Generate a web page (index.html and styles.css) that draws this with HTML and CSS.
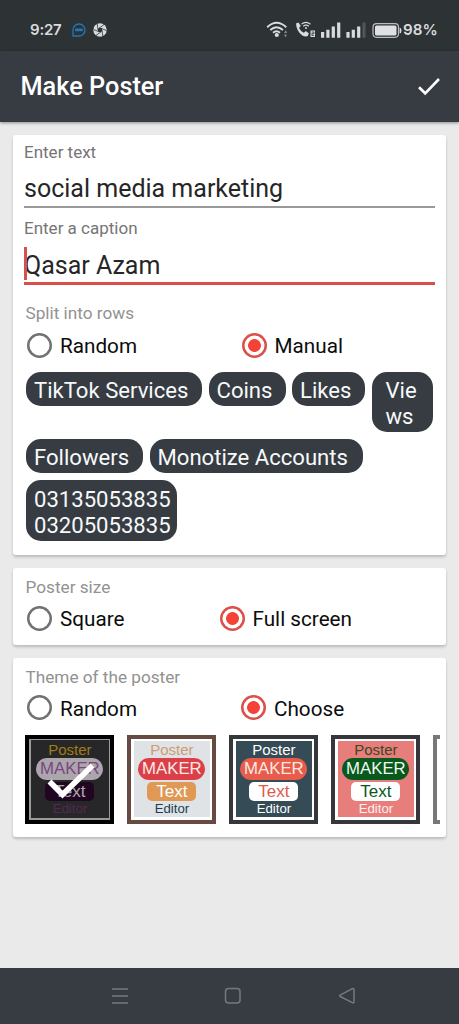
FILE: index.html
```html
<!DOCTYPE html>
<html lang="en">
<head>
<meta charset="utf-8">
<title>Make Poster</title>
<link rel="stylesheet" href="styles.css">
</head>
<body>
<div class="screen">
  <div class="statusbar">
    <span class="clock">9:27</span>
    <svg class="st-chat" width="14" height="14" viewBox="0 0 14 14"><path d="M1 13V7a6 6 0 1 1 6 6z" fill="none" stroke="#2377b3" stroke-width="1.3"/><rect x="3" y="5.5" width="8" height="2.8" rx="1" fill="#2377b3"/></svg>
    <svg class="st-shutter" width="14" height="14" viewBox="0 0 14 14"><circle cx="7" cy="7" r="6.7" fill="#d9dbdc"/><circle cx="7" cy="7" r="2.200" fill="#2d3235"/><path d="M5 7L4.200 .8M6 5.200L11.100 1.500M8 5.200L13.500 7.600M9 7L9.800 13.200M8 8.800L2.900 12.500M6 8.800L.5 6.400" stroke="#2d3235" stroke-width=".8"/></svg>
    <svg class="st-icons" width="136" height="20" viewBox="0 0 136 20">
      <g fill="none" stroke="#d9dbdc" stroke-width="1.900">
        <path d="M1.200 8.200Q10.500 -.6 20.300 8.200M4.300 11Q10.500 5.300 17 11M7 13.800Q10.500 10.800 14 13.800"/>
      </g>
      <circle cx="10.800" cy="16" r="2.100" fill="#d9dbdc"/>
      <path d="M18 14l2-3 1 3zM18 15.500h3l-1.500 3z" fill="#85898c"/>
      <path d="M30 4.500l2.500-1.100 2.200 3.700-1.700 2q1.700 3.500 4.800 4.700l2-1.700 3 2.100-.9 2.800q-2.300 1.200-5.600-.6Q30.500 12.500 30 4.500z" fill="#d9dbdc"/>
      <path d="M35.500 5.200q4.400-3.700 9 0M37.200 7.200q2.800-2.200 5.600 0" fill="none" stroke="#d9dbdc" stroke-width="1.100"/><circle cx="40" cy="8.900" r="1" fill="#d9dbdc"/>
      <rect x="44.500" y="11.500" width="4.500" height="6.500" fill="#d9dbdc"/><path d="M45.700 13h2.200v1.600h-2v1.800h2.200" fill="none" stroke="#2d3235" stroke-width=".8"/>
      <path d="M55 13h3.200v5.700H55zM60.300 10.800h3.200v7.900h-3.200zM65.700 7.600h3.200v11.100h-3.200zM71.100 3.500h3.200v15.200h-3.200zM80.400 13h3.200v5.700h-3.200zM85.700 10.800h3.200v7.900h-3.200zM91.100 7.600h3.200v11.100h-3.200z" fill="#d9dbdc"/>
      <rect x="96.500" y="3.500" width="3" height="15.200" fill="#50565a"/>
      <rect x="107" y="4.700" width="25.500" height="13.600" rx="3.500" fill="none" stroke="#babdbf" stroke-width="1.200"/>
      <rect x="109" y="6.600" width="21.500" height="9.800" rx="1.500" fill="#dfe0e1"/>
      <path d="M133.600 8.500q1.900.4 1.900 3t-1.900 3z" fill="#d9dbdc"/>
    </svg>
    <span class="battery">98%</span>
  </div>
  <header class="appbar">
    <h1>Make Poster</h1>
    <svg width="24" height="20" viewBox="0 0 24 20"><path d="M2 10.200L8.200 16.300L22 2" fill="none" stroke="#fff" stroke-width="2.600"/></svg>
  </header>
  <main>
    <section class="card text-card">
      <label class="field-label">Enter text</label>
      <div class="field">social media marketing</div>
      <label class="field-label second">Enter a caption</label>
      <div class="field focused"><i class="caret"></i>Qasar Azam</div>
      <h2 class="section">Split into rows</h2>
      <div class="options manual">
        <span class="option"><i class="radio"></i>Random</span>
        <span class="option"><i class="radio on"></i>Manual</span>
      </div>
      <div class="chips">
        <div class="chip-row"><span class="chip c-tiktok">TikTok Services</span><span class="chip c-coins">Coins</span><span class="chip c-likes">Likes</span><span class="chip c-views">Vie<br>ws</span></div>
        <div class="chip-row"><span class="chip c-followers">Followers</span><span class="chip c-accounts">Monotize Accounts</span></div>
        <div class="chip-row"><span class="chip c-phone">03135053835<br>03205053835</span></div>
      </div>
    </section>
    <section class="card size-card">
      <h2 class="section">Poster size</h2>
      <div class="options size">
        <span class="option"><i class="radio"></i>Square</span>
        <span class="option"><i class="radio on"></i>Full screen</span>
      </div>
    </section>
    <section class="card theme-card">
      <h2 class="section">Theme of the poster</h2>
      <div class="options theme">
        <span class="option"><i class="radio"></i>Random</span>
        <span class="option"><i class="radio on"></i>Choose</span>
      </div>
      <div class="thumbs">
        <div class="thumb t-dark"><div class="art"><span class="l1">Poster</span><span class="l2">MAKER</span><span class="l3">Text</span><span class="l4">Editor</span></div>
          <svg class="tick" width="48" height="38" viewBox="0 0 48 38"><path d="M2.500 18.500L15.500 31.500L45.500 2.500" fill="none" stroke="#fff" stroke-width="5.600"/></svg></div>
        <div class="thumb t-light"><div class="art"><span class="l1">Poster</span><span class="l2">MAKER</span><span class="l3">Text</span><span class="l4">Editor</span></div></div>
        <div class="thumb t-slate"><div class="art"><span class="l1">Poster</span><span class="l2">MAKER</span><span class="l3">Text</span><span class="l4">Editor</span></div></div>
        <div class="thumb t-pink"><div class="art"><span class="l1">Poster</span><span class="l2">MAKER</span><span class="l3">Text</span><span class="l4">Editor</span></div></div>
        <div class="thumb t-next"><div class="art"></div></div>
      </div>
    </section>
  </main>
  <nav class="navbar">
    <svg width="18" height="18" viewBox="0 0 18 18"><path d="M1 2h16M1 9h16M1 16h16"/></svg>
    <svg width="18" height="18" viewBox="0 0 18 18"><rect x="1.500" y="1.500" width="14.500" height="14.500" rx="3"/></svg>
    <svg width="18" height="18" viewBox="0 0 18 18"><path d="M2.200 8.100L14.300 1.700Q16 1 16 2.700V14.700Q16 16.400 14.300 15.600L2.200 9.500Q1 8.800 2.200 8.100z"/></svg>
  </nav>
</div>
</body>
</html>
```
FILE: styles.css
```css
* { box-sizing: border-box; }
body { margin: 0; font-family: Roboto, "Liberation Sans", sans-serif; background: #eaeaea; }
h1, h2 { margin: 0; font-weight: 400; }
svg { flex: none; display: block; }
.screen { width: 459px; height: 1024px; display: flex; flex-direction: column; overflow: hidden; }

.statusbar { height: 51px; flex: none; background: #2d3235; padding: 9px 0 0 30px; display: flex; align-items: center; color: #d9dbdc; font-family: Inter, Roboto, sans-serif; }
.clock { width: 42px; font-size: 15px; font-weight: 600; line-height: 20px; letter-spacing: -.2px; }
.st-shutter { margin-left: 7px; }
.st-icons { margin: 0 0 2px 159px; }
.battery { margin-left: 1px; font-size: 15.200px; font-weight: 600; line-height: 20px; }

.appbar { height: 71px; flex: none; background: #363c42; padding: 0 18px 0 20.500px; display: flex; align-items: center; justify-content: space-between; box-shadow: 0 1px 3px #0006; }
.appbar h1 { color: #fff; font-size: 25.300px; font-weight: 500; line-height: 30px; padding-top: 1px; }

main { flex: 1; padding: 13px 13px 0; display: flex; flex-direction: column; }
.card { background: #fff; border-radius: 3px; box-shadow: 0 2px 3px #0003; }
.text-card { height: 420px; padding: 8px 11.500px 0 11px; margin-bottom: 13px; }
.size-card { height: 77px; padding: 9px 11px 0; margin-bottom: 12.500px; }
.theme-card { height: 179px; padding: 9px 6.500px 0 11px; }

.field-label { display: block; height: 18px; font-size: 17px; line-height: 19px; color: #757575; padding-left: 0; }
.field-label.second { margin-top: 11.500px; }
.field { position: relative; height: 46.500px; padding-top: 13px; border-bottom: 2px solid #999; font-size: 25px; line-height: 30px; color: #262626; padding-left: 0; }
.field.focused { height: 48px; padding-top: 13.500px; border-bottom: 3px solid #d94f49; }
.caret { position: absolute; left: 0; top: 10px; width: 2.500px; height: 33px; background: #d94f49; }
.section { height: 20px; font-size: 17.200px; line-height: 21px; color: #929292; padding-left: 1.500px; }
.text-card .section { margin-top: 18px; }

.options { display: grid; height: 26px; margin-left: 2px; margin-top: 9px; font-size: 20.700px; line-height: 26px; color: #0c0c0c; }
.options.manual { grid-template-columns: 214.500px 1fr; }
.options.size { grid-template-columns: 192.500px 1fr; margin-top: 8px; }
.options.theme { grid-template-columns: 214px 1fr; margin-top: 8px; }
.option { display: flex; align-items: center; gap: 8px; white-space: nowrap; padding-top: 1px; }
.radio { flex: none; width: 25px; height: 25px; box-shadow: inset 0 0 0 2.500px #727272; border-radius: 50%; margin: -2px 0 0 1px; }
.radio.on { box-shadow: inset 0 0 0 2.500px #dc5049; background: radial-gradient(circle, #f44336 0 6px, transparent 6.800px); }

.chips { margin: 13.500px 0 0 2px; display: grid; gap: 6.800px; }
.chip-row { display: flex; align-items: flex-start; gap: 6.500px; }
.chip { flex: none; height: 34.500px; padding: 5.500px 0 0 8px; border-radius: 15px; background: #363c42; color: #f7f9fa; font-size: 22.100px; line-height: 26px; white-space: nowrap; }
.c-tiktok { width: 176px; }
.c-coins { width: 77px; }
.c-likes { width: 73px; }
.chip.c-views { width: 61px; height: 60.500px; padding-left: 14px; }
.c-followers { width: 117px; }
.c-accounts { width: 213px; }
.chip.c-phone { width: 151px; height: 60.500px; }

.thumbs { display: flex; gap: 13px; margin: 14px 0 0 1.400px; overflow: hidden; font-family: "Liberation Sans", Arial, sans-serif; }
.thumb { position: relative; flex: none; width: 89px; height: 89px; border: 4px solid #35373b; background: #fff; padding: 2.500px; }
.art { height: 100%; padding-top: 1px; display: flex; flex-direction: column; align-items: center; }
.l1 { font-size: 15px; line-height: 16px; }
.l2 { width: 67px; height: 21.500px; border-radius: 11px; font-size: 16.800px; line-height: 22px; text-align: center; }
.l3 { width: 49px; height: 19px; margin-top: 2.500px; border-radius: 5px; font-size: 17px; line-height: 19.500px; text-align: center; }
.l4 { font-size: 13.200px; line-height: 15px; }
.t-dark { border-color: #000; background: #9a9a9a; padding: 1.500px; }
.t-dark .art { background: #27272a; padding-top: 2px; }
.t-dark .l1 { color: #a07c12; }
.t-dark .l2 { background: #aaa6ab; color: #7c4781; }
.t-dark .l3 { background: #210622; color: #aaa; }
.t-dark .l4 { color: #542850; }
.tick { position: absolute; left: 18px; top: 24px; }
.t-light { border-color: #674b43; }
.t-light .art { background: #e0e3e5; }
.t-light .l1 { color: #ce9b73; }
.t-light .l2 { background: #db3f48; color: #fbe9e6; }
.t-light .l3 { background: #df9955; color: #fff; }
.t-light .l4 { color: #173e54; }
.t-slate .art { background: #354b56; }
.t-slate .l1, .t-slate .l4 { color: #fff; }
.t-slate .l2 { background: #e85c4b; color: #fbe9e0; }
.t-slate .l3 { background: #fff; color: #df5b50; }
.t-pink .art { background: #e77e7c; }
.t-pink .l1 { color: #3b4824; }
.t-pink .l2 { background: #07591d; color: #f1f8f0; }
.t-pink .l3 { background: #fff; color: #07591d; }
.t-pink .l4 { color: #fff0ed; }
.t-next { border-color: #77787a; }
.t-next .art { background: #777; }

.navbar { height: 56px; flex: none; background: #363c42; display: flex; align-items: center; padding-left: 110.500px; gap: 95.500px; }
.navbar svg { fill: none; stroke: #747a80; stroke-width: 1.500; }
```
